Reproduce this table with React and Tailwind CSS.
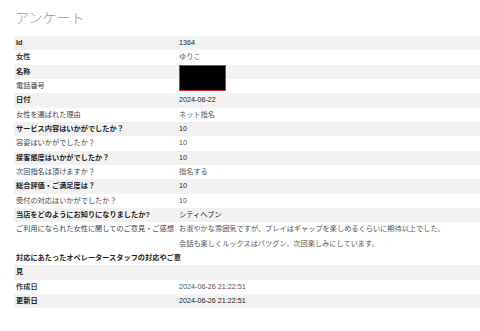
import React from "react";

const rows = [
  { label: "Id", value: "1364", bold: true },
  { label: "女性", value: "ゆりこ", bold: true },
  { label: "名称", value: "", bold: true },
  { label: "電話番号", value: "", bold: false },
  { label: "日付", value: "2024-06-22", bold: true },
  { label: "女性を選ばれた理由", value: "ネット指名", bold: false },
  { label: "サービス内容はいかがでしたか？", value: "10", bold: true },
  { label: "容姿はいかがでしたか？", value: "10", bold: false },
  { label: "接客態度はいかがでしたか？", value: "10", bold: true },
  { label: "次回指名は頂けますか？", value: "指名する", bold: false },
  { label: "総合評価・ご満足度は？", value: "10", bold: true },
  { label: "受付の対応はいかがでしたか？", value: "10", bold: false },
  { label: "当店をどのようにお知りになりましたか?", value: "シティヘブン", bold: true },
];

function Row({ label, value, bold, gray }) {
  return (
    <div className={`flex h-[14.33px] items-center ${gray ? "bg-[#f2f2f2]" : "bg-white"}`}>
      <div
        className={`w-[164px] shrink-0 pl-[2px] whitespace-nowrap ${
          bold ? "font-bold" : "font-normal"
        } ${gray ? "text-[#222]" : "text-[#444]"}`}
      >
        {label}
      </div>
      <div className={`pl-[1px] whitespace-nowrap ${gray ? "text-[#222]" : "text-[#555]"}`}>{value}</div>
    </div>
  );
}

export default function App() {
  return (
    <div
      className="w-[480px] h-[331px] bg-white overflow-hidden"
      style={{ fontFamily: '"Liberation Sans", "Noto Sans CJK JP", sans-serif' }}
    >
      <div className="pl-[14px] pt-[7px]">
        <h1 className="text-[14px] leading-[22px] font-light text-[#999] h-[29px] pl-[1px]">アンケート</h1>
        <div className="relative text-[7.2px] leading-[14.33px]">
          {rows.map((r, i) => (
            <Row key={i} {...r} gray={i % 2 === 0} />
          ))}
          <div className="flex bg-white h-[28.67px] items-start">
            <div className="w-[164px] shrink-0 pl-[2px] whitespace-nowrap text-[#444]">
              ご利用になられた女性に関してのご意見・ご感想
            </div>
            <div className="pl-[1px] text-[#555]">
              <div>お淑やかな雰囲気ですが、プレイはギャップを楽しめるくらいに期待以上でした。</div>
              <div>会話も楽しくルックスはバツグン。次回楽しみにしています。</div>
            </div>
          </div>
          <div className="flex bg-white h-[14.33px] items-center">
            <div className="pl-[2px] whitespace-nowrap font-bold text-[#222]">
              対応にあたったオペレータースタッフの対応やご意
            </div>
          </div>
          <div className="flex bg-[#f2f2f2] h-[14.33px] items-center">
            <div className="pl-[2px] font-bold text-[#222]">見</div>
          </div>
          <Row label="作成日" value="2024-06-26 21:22:51" bold gray={false} />
          <Row label="更新日" value="2024-06-26 21:22:51" bold gray />
          <div className="absolute left-[165px] top-[29px] w-[47px] h-[26px] bg-black border-[1.5px] border-solid border-[#d32f2f]" />
        </div>
      </div>
    </div>
  );
}
